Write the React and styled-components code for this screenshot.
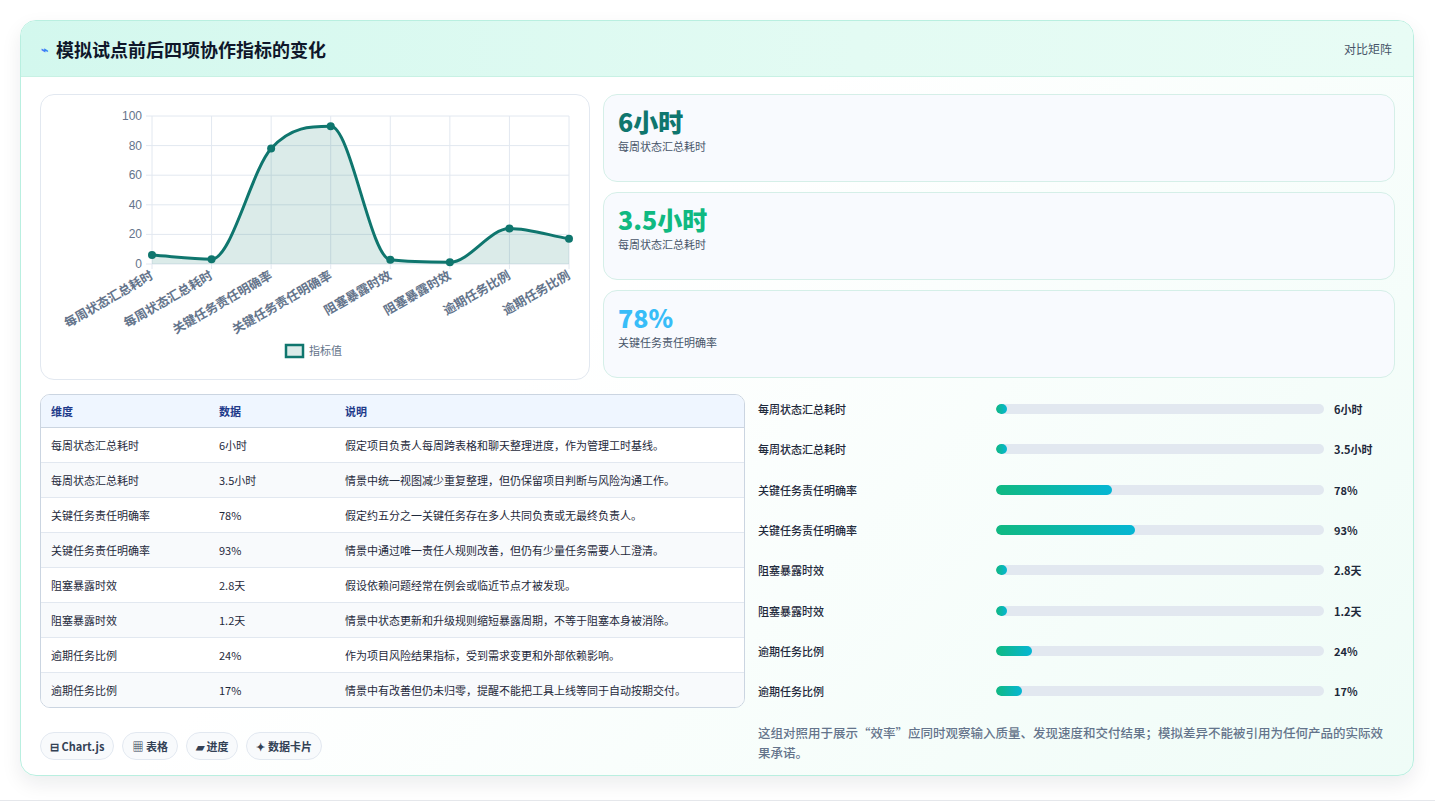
import React from 'react';
import styled, { createGlobalStyle } from 'styled-components';

const GlobalStyle = createGlobalStyle`
  html, body { margin: 0; padding: 0; background: #fff; }
  body { font-family: "Noto Sans CJK SC", "Noto Sans", sans-serif; color: #1e293b; }
`;

const Page = styled.div`
  padding: 20px 21px 22px 20px;
  min-height: 801px;
  box-sizing: border-box;
  border-bottom: 1px solid #e5e7eb;
`;

const Panel = styled.div`
  border: 1px solid #b9efe0;
  border-radius: 16px;
  background: linear-gradient(135deg, #ffffff 40%, #effcf7 100%);
  box-shadow: 0 8px 20px rgba(15, 23, 42, 0.08);
  overflow: hidden;
`;

const Header = styled.div`
  height: 55px;
  display: flex;
  align-items: center;
  justify-content: space-between;
  padding: 0 21px 0 20px;
  background: linear-gradient(90deg, #d3f8ee 0%, #e3fbf3 60%, #e8fcf5 100%);
  border-bottom: 1px solid #c8f1e4;
`;

const Title = styled.h1`
  margin: 0;
  font-size: 18px;
  font-weight: 700;
  color: #0f172a;
  display: flex;
  align-items: center;
  gap: 8px;
`;

const HeaderTag = styled.span`
  font-size: 12px;
  color: #475569;
`;

const Body = styled.div`
  padding: 17px 18px 12px 19px;
  display: grid;
  grid-template-columns: 705px 1fr;
  column-gap: 13px;
  row-gap: 14px;
`;

const TopRow = styled.div`
  grid-column: 1 / 3;
  display: grid;
  grid-template-columns: 550px 1fr;
  gap: 13px;
`;

const ChartCard = styled.div`
  height: 286px;
  background: #fff;
  border: 1px solid #e2e8f0;
  border-radius: 14px;
  box-sizing: border-box;
`;

const Stats = styled.div`
  display: flex;
  flex-direction: column;
  gap: 10px;
`;

const StatCard = styled.div`
  height: 88px;
  box-sizing: border-box;
  background: #f8fafe;
  border: 1px solid #d5efe8;
  border-radius: 14px;
  padding: 9px 14px;
`;

const StatValue = styled.div`
  font-size: 25px;
  font-weight: 800;
  color: ${p => p.$color};
  line-height: 34px;
`;

const StatLabel = styled.div`
  font-size: 11px;
  color: #475569;
`;

const Table = styled.table`
  width: 100%;
  border-collapse: separate;
  border-spacing: 0;
  border: 1px solid #cbd5e1;
  border-radius: 10px;
  overflow: hidden;
  font-size: 11px;
`;

const Th = styled.th`
  text-align: left;
  font-weight: 600;
  color: #1e3a8a;
  background: #eff6ff;
  height: 32px;
  padding: 0 10px;
  border-bottom: 1px solid #cbd5e1;
`;

const Td = styled.td`
  height: 34px;
  padding: 0 10px;
  color: #1e293b;
  border-top: ${p => (p.$first ? 'none' : '1px solid #e2e8f0')};
  background: ${p => (p.$odd ? '#f8fafc' : '#fff')};
`;

const Bars = styled.div`
  display: flex;
  flex-directionion: column;
  flex-direction: column;
  margin-top: -5px;
`;

const BarRow = styled.div`
  display: grid;
  grid-template-columns: 228px 328px 1fr;
  column-gap: 10px;
  align-items: center;
  height: 40.3px;
  font-size: 11px;
  font-weight: 500;
  & > span:last-child { font-weight: 700; }
`;

const Track = styled.div`
  height: 10px;
  border-radius: 5px;
  background: #e2e8f0;
  overflow: hidden;
`;

const Fill = styled.div`
  height: 100%;
  border-radius: 5px;
  background: linear-gradient(90deg, #10b981, #06b6d4);
`;

const Tags = styled.div`
  display: flex;
  gap: 8px;
  padding-top: 24px;
`;

const Tag = styled.span`
  font-size: 11px;
  font-weight: 600;
  color: #334155;
  background: #f8fafc;
  border: 1px solid #e2e8f0;
  border-radius: 14px;
  padding: 5px 9px;
`;

const Note = styled.p`
  margin: 12px 0 0;
  font-size: 12.5px;
  line-height: 20px;
  color: #64748b;
  font-weight: 500;
`;

const rows = [
  ['每周状态汇总耗时', '6小时', '假定项目负责人每周跨表格和聊天整理进度，作为管理工时基线。', 6, 0.035],
  ['每周状态汇总耗时', '3.5小时', '情景中统一视图减少重复整理，但仍保留项目判断与风险沟通工作。', 3.2, 0.035],
  ['关键任务责任明确率', '78%', '假定约五分之一关键任务存在多人共同负责或无最终负责人。', 78, 0.354],
  ['关键任务责任明确率', '93%', '情景中通过唯一责任人规则改善，但仍有少量任务需要人工澄清。', 93, 0.424],
  ['阻塞暴露时效', '2.8天', '假设依赖问题经常在例会或临近节点才被发现。', 2.8, 0.035],
  ['阻塞暴露时效', '1.2天', '情景中状态更新和升级规则缩短暴露周期，不等于阻塞本身被消除。', 1.2, 0.035],
  ['逾期任务比例', '24%', '作为项目风险结果指标，受到需求变更和外部依赖影响。', 24, 0.11],
  ['逾期任务比例', '17%', '情景中有改善但仍未归零，提醒不能把工具上线等同于自动按期交付。', 17, 0.08],
];

const X0 = 111, X1 = 528, Y0 = 21, Y1 = 169;
const px = i => X0 + (i * (X1 - X0)) / 7;
const py = v => Y1 - (v / 100) * (Y1 - Y0);

// monotone cubic so the line never dips below a point
function curve(pts) {
  const n = pts.length;
  const d = [], m = [];
  for (let i = 0; i < n - 1; i++) d.push((pts[i + 1][1] - pts[i][1]) / (pts[i + 1][0] - pts[i][0]));
  for (let i = 0; i < n; i++) {
    if (i === 0) m.push(d[0]);
    else if (i === n - 1) m.push(d[n - 2]);
    else m.push(d[i - 1] * d[i] <= 0 ? 0 : (d[i - 1] + d[i]) / 2);
  }
  for (let i = 0; i < n - 1; i++) {
    if (d[i] === 0) { m[i] = 0; m[i + 1] = 0; continue; }
    const a = m[i] / d[i], b = m[i + 1] / d[i], s = a * a + b * b;
    if (s > 9) { const t = 3 / Math.sqrt(s); m[i] = t * a * d[i]; m[i + 1] = t * b * d[i]; }
  }
  let path = `M${pts[0][0]},${pts[0][1]}`;
  for (let i = 0; i < n - 1; i++) {
    const h = (pts[i + 1][0] - pts[i][0]) / 3;
    path += ` C${pts[i][0] + h},${pts[i][1] + m[i] * h} ${pts[i + 1][0] - h},${pts[i + 1][1] - m[i + 1] * h} ${pts[i + 1][0]},${pts[i + 1][1]}`;
  }
  return path;
}

function LineChart() {
  const pts = rows.map((r, i) => [px(i), py(r[3])]);
  const line = curve(pts);
  const area = `${line} L${X1},${Y1} L${X0},${Y1} Z`;
  return (
    <svg width="548" height="284" viewBox="0 0 548 284">
      {[0, 20, 40, 60, 80, 100].map(v => (
        <g key={v}>
          <line x1={X0 - 6} x2={X1} y1={py(v)} y2={py(v)} stroke="#e2e8f0" />
          <text x={X0 - 10} y={py(v) + 4} fontSize="12" fill="#64748b" textAnchor="end" fontFamily="Liberation Sans, sans-serif">{v}</text>
        </g>
      ))}
      {rows.map((r, i) => (
        <g key={i}>
          <line x1={px(i)} x2={px(i)} y1={Y0} y2={Y1 + 5} stroke="#e2e8f0" />
          <text transform={`translate(${px(i) + 2},${Y1 + 14}) rotate(-30)`} fontSize="12.5" fontWeight="600" fill="#64748b" textAnchor="end">{r[0]}</text>
        </g>
      ))}
      <path d={area} fill="rgba(15,118,110,0.15)" />
      <path d={line} fill="none" stroke="#0f766e" strokeWidth="3" />
      {pts.map((p, i) => <circle key={i} cx={p[0]} cy={p[1]} r="4" fill="#0f766e" />)}
      <rect x="245" y="250" width="17" height="12" fill="rgba(15,118,110,0.15)" stroke="#0f766e" strokeWidth="2.5" />
      <text x="268" y="260" fontSize="11" fill="#64748b">指标值</text>
    </svg>
  );
}

export default function App() {
  return (
    <>
      <GlobalStyle />
      <Page>
        <Panel>
          <Header>
            <Title><span style={{ color: '#3b82f6', fontSize: 12 }}>⌁</span>模拟试点前后四项协作指标的变化</Title>
            <HeaderTag>对比矩阵</HeaderTag>
          </Header>
          <Body>
            <TopRow>
              <ChartCard><LineChart /></ChartCard>
              <Stats>
                <StatCard><StatValue $color="#0f766e">6小时</StatValue><StatLabel>每周状态汇总耗时</StatLabel></StatCard>
                <StatCard><StatValue $color="#10b981">3.5小时</StatValue><StatLabel>每周状态汇总耗时</StatLabel></StatCard>
                <StatCard><StatValue $color="#38bdf8">78%</StatValue><StatLabel>关键任务责任明确率</StatLabel></StatCard>
              </Stats>
            </TopRow>
            <div>
              <Table>
                <thead>
                  <tr><Th style={{ width: 148 }}>维度</Th><Th style={{ width: 106 }}>数据</Th><Th>说明</Th></tr>
                </thead>
                <tbody>
                  {rows.map((r, i) => (
                    <tr key={i}>
                      <Td $first={i === 0} $odd={i % 2 === 1}>{r[0]}</Td>
                      <Td $first={i === 0} $odd={i % 2 === 1}>{r[1]}</Td>
                      <Td $first={i === 0} $odd={i % 2 === 1}>{r[2]}</Td>
                    </tr>
                  ))}
                </tbody>
              </Table>
              <Tags>
                <Tag>⊟ Chart.js</Tag>
                <Tag>▦ 表格</Tag>
                <Tag>▰ 进度</Tag>
                <Tag>✦ 数据卡片</Tag>
              </Tags>
            </div>
            <Bars>
              {rows.map((r, i) => (
                <BarRow key={i}>
                  <span>{r[0]}</span>
                  <Track><Fill style={{ width: `${r[4] * 100}%` }} /></Track>
                  <span>{r[1]}</span>
                </BarRow>
              ))}
              <Note>这组对照用于展示“效率”应同时观察输入质量、发现速度和交付结果；模拟差异不能被引用为任何产品的实际效果承诺。</Note>
            </Bars>
          </Body>
        </Panel>
      </Page>
    </>
  );
}
